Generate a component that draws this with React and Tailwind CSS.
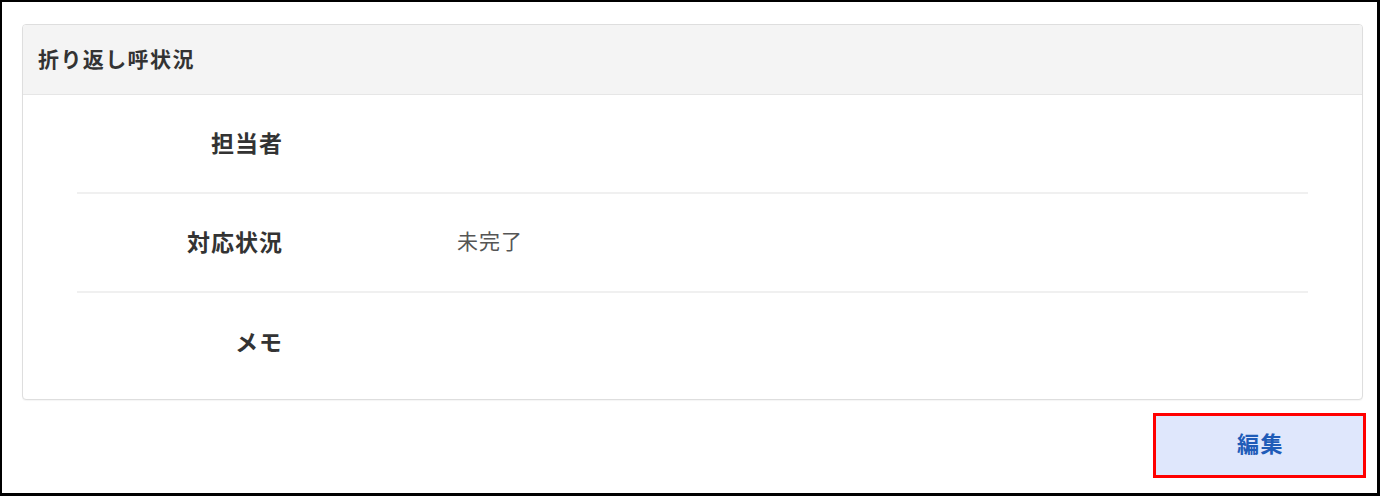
export default function App() {
  const font = { fontFamily: '"Noto Sans CJK JP", "Noto Sans", sans-serif' };
  const rows = [
    { label: "担当者", value: "" },
    { label: "対応状況", value: "未完了" },
    { label: "メモ", value: "" },
  ];
  return (
    <div className="w-[1382px] h-[497px] bg-white" style={font}>
      <div className="w-[1380px] h-[496px] border-2 border-r-[3px] border-b-[3px] border-black pl-[20px] pt-[22px] box-border">
        <div className="w-[1341px] h-[376px] border border-[#dedede] rounded-[4px] bg-white shadow-[0_1px_1px_rgba(0,0,0,0.04)] overflow-hidden flex flex-col">
          <div className="h-[70px] bg-[#f4f4f4] border-b border-[#e6e6e6] flex items-center pl-[15px] pb-[2px] shrink-0">
            <span className="text-[21px] tracking-[1.4px] font-bold text-[#333]">折り返し呼状況</span>
          </div>
          <div className="px-[54px]">
            {rows.map((r, i) => (
              <div
                key={r.label}
                className={
                  "h-[99px] flex items-center pb-[3px] " +
                  (i < rows.length - 1 ? "border-b-2 border-[#f0f0f0]" : "")
                }
              >
                <div className="w-[206px] text-right text-[23px] tracking-[1px] font-bold text-[#333]">{r.label}</div>
                <div className="ml-[174px] text-[21px] tracking-[1px] text-[#555]">{r.value}</div>
              </div>
            ))}
          </div>
        </div>
        <div className="w-[1344px] flex justify-end mt-[13px]">
          <button className="w-[213px] h-[65px] border-[3px] border-[#ff0000] bg-[#dfe7fc] text-[#1f5cb8] text-[22px] tracking-[1.5px] pl-[2px] pb-[7px] font-bold flex items-center justify-center">
            編集
          </button>
        </div>
      </div>
    </div>
  );
}
